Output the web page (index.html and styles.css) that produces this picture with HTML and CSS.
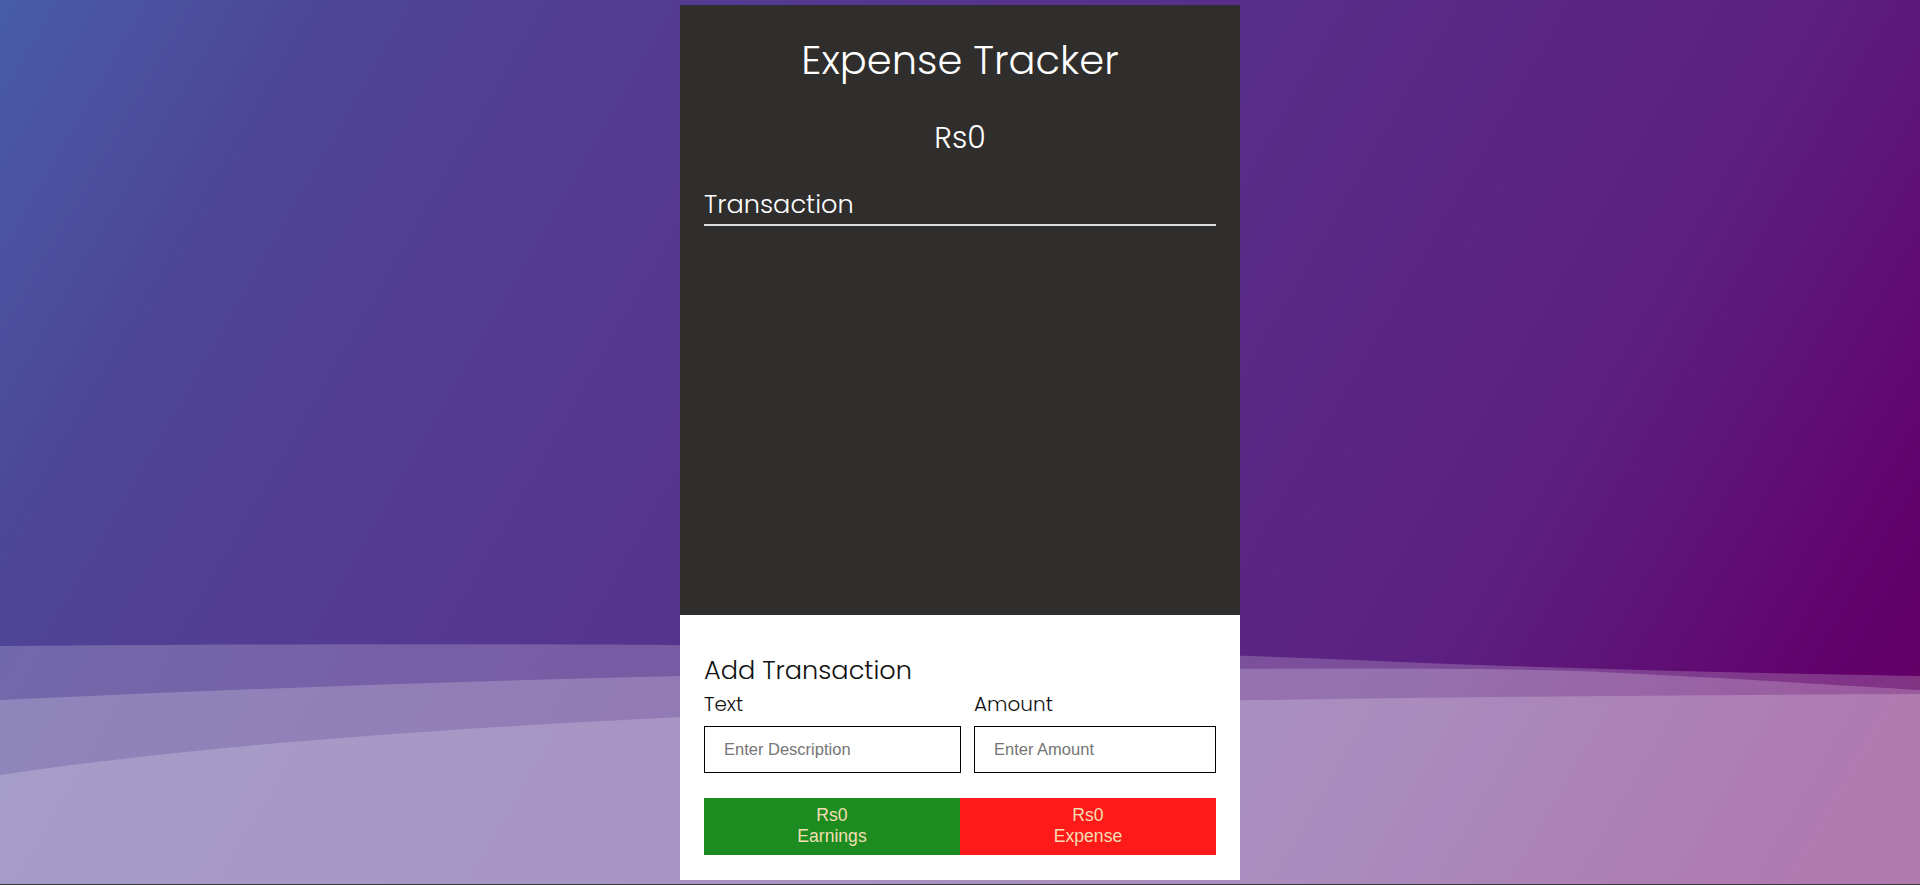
FILE: index.html
```html
<!DOCTYPE html>
<html lang="en">
<head>
<meta charset="utf-8">
<title>Expense Tracker</title>
<link rel="stylesheet" href="styles.css">
</head>
<body>
<svg class="waves" viewBox="0 0 1920 884" preserveAspectRatio="none" aria-hidden="true">
  <path class="wave" d="M0 646 C 600 641, 1050 646, 1400 662 C 1600 670, 1800 674, 1920 676 V884 H0 Z"/>
  <path class="wave" d="M0 700 C 300 686, 600 676, 900 672 C 1200 668, 1500 667, 1600 672 C 1750 679, 1850 686, 1920 690 V884 H0 Z"/>
  <path class="wave" d="M0 775 C 200 745, 450 728, 700 716 C 1000 703, 1300 697, 1920 694 V884 H0 Z"/>
</svg>
<main class="card">
  <section class="top">
    <h1 class="title">Expense Tracker</h1>
    <div class="balance">Rs0</div>
    <h2 class="section-head">Transaction</h2>
    <ul class="list"></ul>
  </section>
  <section class="bottom">
    <h2 class="add-head">Add Transaction</h2>
    <form class="form">
      <div class="field">
        <label class="label" for="desc">Text</label>
        <input class="input" id="desc" type="text" placeholder="Enter Description">
      </div>
      <div class="field">
        <label class="label" for="amt">Amount</label>
        <input class="input" id="amt" type="text" placeholder="Enter Amount">
      </div>
    </form>
    <div class="totals">
      <button class="total earn" type="button">Rs0<br>Earnings</button>
      <button class="total spend" type="button">Rs0<br>Expense</button>
    </div>
  </section>
</main>
</body>
</html>
```
FILE: styles.css
```css
html {
  background: #3a3a3a;
}
body {
  margin: 0;
  height: 884px;
  position: relative;
  overflow: hidden;
  background: linear-gradient(120deg, #475ca9 0%, #4e4596 14%, #543a92 30%, #582c88 55%, #5c2080 75%, #62006a 92%, #640060 100%);
  font-family: "Poppins", "Open Sans", sans-serif;
}
.waves {
  position: absolute;
  left: 0;
  top: 0;
  width: 100%;
  height: 100%;
}
.wave {
  fill: rgba(255, 255, 255, 0.2);
}
.card {
  position: relative;
  width: 560px;
  height: 875px;
  margin: 5px auto 0;
  display: flex;
  flex-direction: column;
}
.top {
  flex: 1;
  background: #302e2c;
  color: #fff;
  padding: 31px 24px 0;
  display: flex;
  flex-direction: column;
}
.title {
  margin: 0;
  font-size: 40px;
  font-weight: 300;
  line-height: 48px;
  text-align: center;
}
.balance {
  margin-top: 36px;
  font-size: 30px;
  font-weight: 300;
  line-height: 36px;
  text-align: center;
}
.section-head {
  margin: 33px 0 0;
  font-size: 25.6px;
  font-weight: 300;
  line-height: 30px;
  padding-bottom: 5px;
  border-bottom: 2px solid #dcdcdc;
}
.list {
  margin: 0;
  padding: 0;
  list-style: none;
  flex: 1;
}
.bottom {
  background: #fff;
  padding: 40px 24px 25px;
  color: #111;
}
.add-head {
  margin: 0;
  font-size: 25.6px;
  font-weight: 300;
  line-height: 30px;
}
.form {
  margin-top: 7px;
  display: grid;
  grid-template-columns: 257px 242px;
  column-gap: 13px;
}
.field {
  display: flex;
  flex-direction: column;
}
.label {
  font-size: 20px;
  font-weight: 300;
  line-height: 24px;
  margin-bottom: 10px;
}
.input {
  box-sizing: border-box;
  width: 100%;
  height: 47px;
  border: 1px solid #000;
  padding: 0 0 0 19px;
  font-family: "Liberation Sans", Arial, sans-serif;
  font-size: 16.5px;
  color: #111;
  outline: none;
}
.input::placeholder {
  color: #757575;
}
.totals {
  margin-top: 25px;
  display: grid;
  grid-template-columns: 1fr 1fr;
}
.total {
  border: 0;
  margin: 0;
  height: 57px;
  padding: 7px 0 8px;
  font-family: "Liberation Sans", Arial, sans-serif;
  font-size: 17.6px;
  line-height: 21px;
  color: #f5deb3;
  text-align: center;
}
.earn {
  background: #1c8c20;
}
.spend {
  background: #ff1a1a;
}
```
